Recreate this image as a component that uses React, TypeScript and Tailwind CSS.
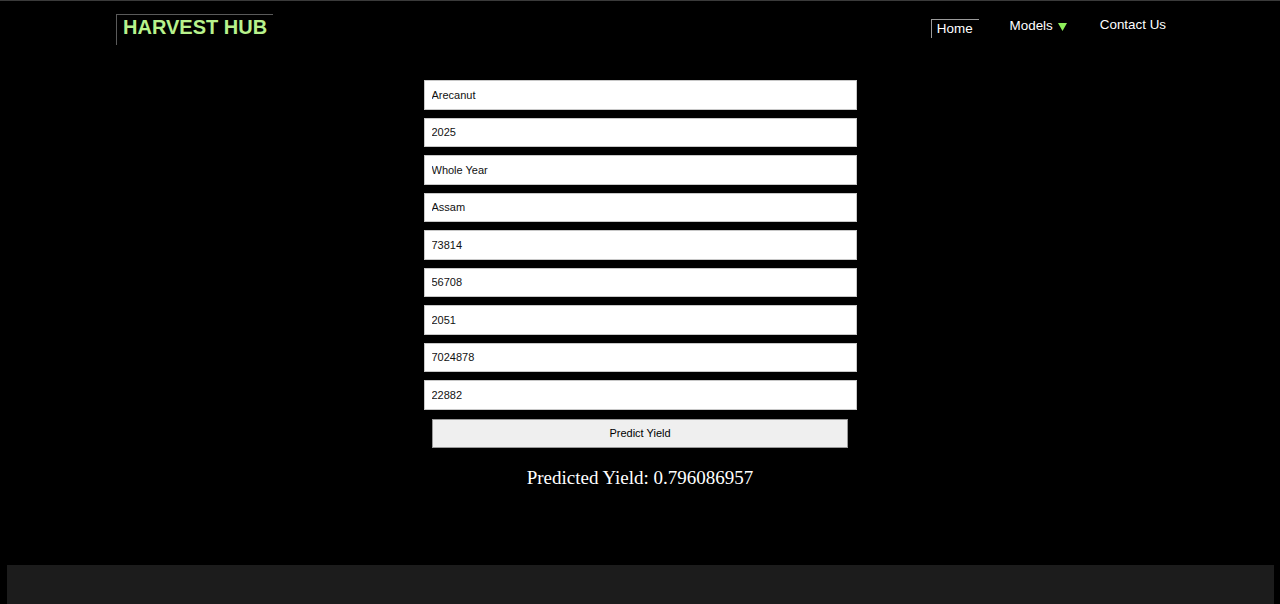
const fields = [
  "Arecanut",
  "2025",
  "Whole Year",
  "Assam",
  "73814",
  "56708",
  "2051",
  "7024878",
  "22882",
];

export default function App() {
  return (
    <div className="min-h-screen bg-black border-t border-[#3a3a3a] font-['Liberation_Sans',Arial,sans-serif] overflow-hidden">
      <header className="flex h-[79px] items-start justify-between pl-[116px] pr-[114px]">
        <div className="mt-[13px] border-l border-t border-[#5a5a5a] pl-[6px] pr-[6px] pt-[1px] pb-[4px]">
          <span className="text-[20px] font-bold leading-[23px] text-[#b8f28c]">
            HARVEST HUB
          </span>
        </div>
        <nav className="flex items-start text-[13.4px] text-white">
          <a className="mt-[18px] border-l border-t border-[#9a9a9a] pl-[5px] pr-[6px] pt-[1px] leading-[16px] pb-[1px]">
            Home
          </a>
          <a className="ml-[31px] mt-[17px] flex items-center leading-[16px]">
            Models
            <svg width="9" height="9" viewBox="0 0 9 9" className="ml-[5px]">
              <path d="M0 1h9L4.5 9z" fill="#8ef05a" />
            </svg>
          </a>
          <a className="ml-[33px] mt-[16px] leading-[16px]">Contact Us</a>
        </nav>
      </header>

      <main className="flex flex-col items-center">
        <form className="flex w-[433px] flex-col gap-[8px]">
          {fields.map((v, i) => (
            <input
              key={i}
              defaultValue={v}
              className="h-[29.5px] w-full border border-[#c8c8c8] bg-white px-[7px] text-[11px] text-[#111]"
            />
          ))}
          <button
            type="button"
            className="mx-auto mt-[1px] h-[29.5px] w-[416px] border border-[#9a9a9a] bg-[#efefef] text-[11px] text-black"
          >
            Predict Yield
          </button>
        </form>
        <p className="mt-[19px] font-['Liberation_Serif','Times_New_Roman',serif] text-[19px] leading-[22px] text-white">
          Predicted Yield: 0.796086957
        </p>
      </main>

      <footer className="ml-[7px] mr-[6px] mt-[76px] h-[60px] bg-[#1c1c1c]" />
    </div>
  );
}
